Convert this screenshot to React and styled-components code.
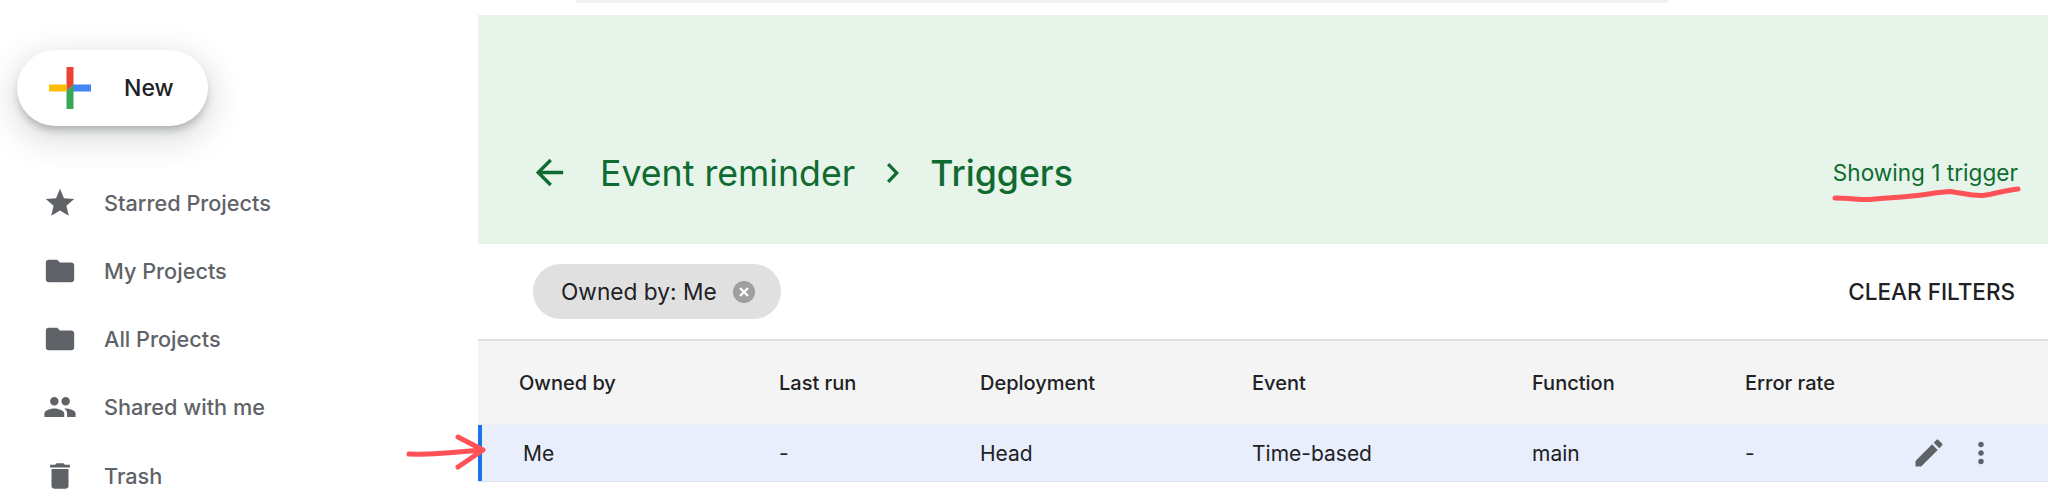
import React from 'react'
import styled, { createGlobalStyle } from 'styled-components'

const GlobalStyle = createGlobalStyle`
  html, body {
    margin: 0;
    padding: 0;
    background: #fff;
    font-family: Inter, Roboto, "Liberation Sans", sans-serif;
    overflow: hidden;
  }
`

const Page = styled.div`
  position: relative;
  display: flex;
  width: 2048px;
  height: 497px;
  overflow: hidden;
`

const Sidebar = styled.aside`
  flex: 0 0 478px;
  padding-top: 50px;
`

const NewButton = styled.button`
  display: flex;
  align-items: center;
  gap: 33px;
  width: 191px;
  height: 76px;
  margin: 0 0 42.5px 17px;
  padding: 0 0 0 32px;
  border: 0;
  border-radius: 38px;
  background: #fff;
  box-shadow: 0 6px 8px -2px rgba(60, 64, 67, 0.34), 0 10px 30px 8px rgba(60, 64, 67, 0.14);
  color: #202124;
  font: 500 23px Inter, sans-serif;
`

const NavRow = styled.div`
  display: flex;
  align-items: center;
  gap: 27px;
  height: 68.25px;
  padding-left: 43px;
  color: #5f6368;
  font-size: 21.7px;
  font-weight: 500;
  svg {
    flex: none;
    fill: #5f6368;
  }
`

const Main = styled.main`
  flex: 1;
  min-width: 0;
`

const TopStrip = styled.div`
  height: 15px;
  padding: 0 380px 0 98px;
`

const SearchEdge = styled.div`
  height: 2px;
  background: #f1f1f3;
  box-shadow: 0 1px 1px rgba(60, 64, 67, 0.06);
`

const Banner = styled.header`
  display: flex;
  align-items: center;
  justify-content: space-between;
  height: 229px;
  padding: 86px 30px 0 51px;
  box-sizing: border-box;
  background: #e6f4ea;
  color: #0f6b30;
  svg {
    fill: #0f6b30;
  }
`

const Crumbs = styled.div`
  display: flex;
  align-items: center;
  font-size: 35.7px;
`

const BackIcon = styled.svg`
  margin-right: 30px;
`

const ChevronIcon = styled.svg`
  margin: 0 31px 0 32px;
`

const Current = styled.span`
  font-weight: 500;
`

const Count = styled.span`
  font-size: 22.6px;
`

const FilterBar = styled.div`
  display: flex;
  align-items: center;
  justify-content: space-between;
  height: 97px;
  padding: 0 33px 0 55px;
  box-sizing: border-box;
  border-bottom: 2px solid #e0e0e0;
`

const Chip = styled.div`
  display: flex;
  align-items: center;
  gap: 16px;
  height: 55px;
  padding: 0 26px 0 28px;
  border-radius: 28px;
  background: #e0e0e0;
  color: #202124;
  font-size: 22.7px;
`

const ClearButton = styled.button`
  padding: 0;
  border: 0;
  background: none;
  color: #202124;
  font: 500 22.5px Inter, sans-serif;
`

const Row = styled.div`
  display: grid;
  grid-template-columns: 260px 201px 272px 280px 213px 1fr;
  align-items: center;
  box-sizing: border-box;
  height: ${p => (p.$head ? '84px' : '57px')};
  padding-left: 41px;
  background: ${p => (p.$head ? '#f4f4f4' : '#e8eefb')};
  color: #202124;
  font-size: ${p => (p.$head ? '20px' : '21px')};
  font-weight: ${p => (p.$head ? 500 : 400)};
  border-bottom: 1px solid ${p => (p.$head ? '#ececec' : '#dfe3ea')};
  box-shadow: ${p => (p.$head ? 'none' : 'inset 4px 0 0 #1a73e8')};
`

const OwnerCell = styled.span`
  padding-left: 4px;
`

const Actions = styled.div`
  display: flex;
  align-items: center;
  justify-content: space-between;
  padding-right: 50px;
`

const RowActions = styled.div`
  display: flex;
  align-items: center;
  gap: 17px;
  svg {
    fill: #5f6368;
  }
`

const Scribble = styled.svg`
  position: absolute;
  top: 0;
  left: 0;
  pointer-events: none;
  fill: none;
  stroke: #ff5257;
  stroke-width: 5;
  stroke-linecap: round;
  stroke-linejoin: round;
`

const navIcons = {
  star: 'M12 17.27L18.18 21l-1.64-7.03L22 9.24l-7.19-.61L12 2 9.19 8.63 2 9.24l5.46 4.73L5.82 21z',
  folder: 'M10 4H4c-1.1 0-1.99.9-1.99 2L2 18c0 1.1.9 2 2 2h16c1.1 0 2-.9 2-2V8c0-1.1-.9-2-2-2h-8l-2-2z',
  people: 'M16 11c1.66 0 2.99-1.34 2.99-3S17.66 5 16 5c-1.66 0-3 1.34-3 3s1.34 3 3 3zm-8 0c1.66 0 2.99-1.34 2.99-3S9.66 5 8 5C6.34 5 5 6.34 5 8s1.34 3 3 3zm0 2c-2.33 0-7 1.17-7 3.5V19h14v-2.5c0-2.33-4.67-3.5-7-3.5zm8 0c-.29 0-.62.02-.97.05 1.16.84 1.97 1.97 1.97 3.45V19h6v-2.5c0-2.33-4.67-3.5-7-3.5z',
  trash: 'M6 19c0 1.1.9 2 2 2h8c1.1 0 2-.9 2-2V7H6v12zM19 4h-3.5l-1-1h-5l-1 1H5v2h14V4z',
}

const navItems = [
  { icon: 'star', label: 'Starred Projects' },
  { icon: 'folder', label: 'My Projects' },
  { icon: 'folder', label: 'All Projects' },
  { icon: 'people', label: 'Shared with me' },
  { icon: 'trash', label: 'Trash' },
]

const columns = ['Owned by', 'Last run', 'Deployment', 'Event', 'Function', 'Error rate']

const Icon = ({ d, size = 34 }) => (
  <svg width={size} height={size} viewBox="0 0 24 24" aria-hidden="true">
    <path d={d} />
  </svg>
)

const PlusLogo = () => (
  <svg width="42" height="42" viewBox="0 0 42 42" aria-hidden="true">
    <path fill="#ea4335" d="M17.5 0h7v17.5L17.5 24.5z" />
    <path fill="#4285f4" d="M24.5 17.5H42v7H17.5z" />
    <path fill="#34a853" d="M17.5 24.5l7-7V42h-7z" />
    <path fill="#fbbc04" d="M0 17.5h17.5v7H0z" />
  </svg>
)

const CloseDot = () => (
  <svg width="22" height="22" viewBox="0 0 22 22" aria-hidden="true">
    <circle cx="11" cy="11" r="11" fill="#9e9e9e" />
    <path d="M7 7l8 8M15 7l-8 8" stroke="#fff" strokeWidth="2.4" />
  </svg>
)

const App = () => {
  return (
    <Page>
      <GlobalStyle />
      <Sidebar>
        <NewButton>
          <PlusLogo />
          New
        </NewButton>
        {navItems.map(item => (
          <NavRow key={item.label}>
            <Icon d={navIcons[item.icon]} />
            {item.label}
          </NavRow>
        ))}
      </Sidebar>
      <Main>
        <TopStrip>
          <SearchEdge />
        </TopStrip>
        <Banner>
          <Crumbs>
            <BackIcon width="41" height="41" viewBox="0 0 24 24">
              <path d="M20 11H7.83l5.59-5.59L12 4l-8 8 8 8 1.41-1.41L7.83 13H20v-2z" />
            </BackIcon>
            Event reminder
            <ChevronIcon width="12" height="20" viewBox="0 0 12 20">
              <path d="M2.3 0L12 10l-9.7 10L0 17.7 7.5 10 0 2.3z" />
            </ChevronIcon>
            <Current>Triggers</Current>
          </Crumbs>
          <Count>Showing 1 trigger</Count>
        </Banner>
        <FilterBar>
          <Chip>
            Owned by: Me
            <CloseDot />
          </Chip>
          <ClearButton>CLEAR FILTERS</ClearButton>
        </FilterBar>
        <Row $head>
          {columns.map(c => (
            <span key={c}>{c}</span>
          ))}
        </Row>
        <Row>
          <OwnerCell>Me</OwnerCell>
          <span>-</span>
          <span>Head</span>
          <span>Time-based</span>
          <span>main</span>
          <Actions>
            <span>-</span>
            <RowActions>
              <Icon size={36} d="M3 17.25V21h3.75L17.81 9.94l-3.75-3.75L3 17.25zM20.71 7.04c.39-.39.39-1.02 0-1.41l-2.34-2.34c-.39-.39-1.02-.39-1.41 0l-1.83 1.83 3.75 3.75 1.83-1.83z" />
              <Icon d="M12 8c1.1 0 2-.9 2-2s-.9-2-2-2-2 .9-2 2 .9 2 2 2zm0 2c-1.1 0-2 .9-2 2s.9 2 2 2 2-.9 2-2-.9-2-2-2zm0 6c-1.1 0-2 .9-2 2s.9 2 2 2 2-.9 2-2-.9-2-2-2z" />
            </RowActions>
          </Actions>
        </Row>
      </Main>
      <Scribble width="2048" height="497" viewBox="0 0 2048 497" aria-hidden="true">
        <path d="M1835 198 C1850 198 1860 200 1870 199.5 C1885 198 1895 197.5 1907 196.5 C1925 195 1938 192 1950 191.5 C1962 193 1972 196 1983 195.5 C1995 194 2005 190 2018 189" />
        <path d="M409 454 C430 455 460 452 482 450 M458 437 L483 450 L458 467" />
      </Scribble>
    </Page>
  )
}

export default App
